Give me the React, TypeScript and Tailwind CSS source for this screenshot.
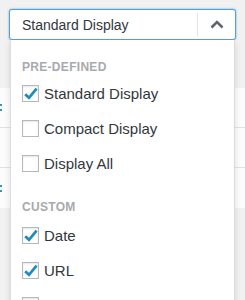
import React from "react";

const font = { fontFamily: '"Liberation Sans", Arial, sans-serif' };

function Check() {
  return (
    <svg width="16" height="16" viewBox="0 0 16 16" className="absolute left-[0px] top-[0px]">
      <path d="M2.2 8.2 L6 11.8 L13.6 2.6" fill="none" stroke="#1e8cbe" strokeWidth="2.8" strokeLinecap="butt" strokeLinejoin="miter" />
    </svg>
  );
}

function Row({ label, checked }: { label?: string; checked?: boolean }) {
  return (
    <div className="flex h-[35px] items-center gap-[5px]">
      <div className="relative h-[17px] w-[17px] shrink-0 border border-[#b4b9be] bg-white shadow-[inset_0_1px_2px_rgba(0,0,0,0.1)]">
        {checked && <Check />}
      </div>
      {label && <span className="text-[15px] leading-[18px] text-[#32373c]">{label}</span>}
    </div>
  );
}

function BgRow({ dots }: { dots?: boolean }) {
  return (
    <div className="flex h-[40px] items-center border-b border-[#e1e1e1] bg-[#fcfcfc] last:border-b-0">
      {dots && (
        <div className="flex w-[2px] flex-col gap-[3px]">
          <div className="h-[2px] w-[2px] bg-[#3a8fc2]" />
          <div className="h-[2px] w-[2px] bg-[#3a8fc2]" />
        </div>
      )}
    </div>
  );
}

export default function App() {
  return (
    <div className="relative h-[300px] w-[245px] overflow-hidden bg-[#f1f1f1]" style={font}>
      <div className="h-[88px]" />
      <div className="flex flex-col">
        <BgRow dots />
        <BgRow />
        <BgRow dots />
      </div>

      <div className="absolute left-[9px] top-[9px] w-[227px]">
        <div className="flex h-[31px] items-center rounded-[3px] border border-[#5b9dd9] bg-white shadow-[0_0_2px_rgba(30,140,190,0.8)]">
          <span className="flex-1 pl-[12px] text-[14px] leading-[18px] text-[#32373c]">Standard Display</span>
          <div className="h-[23px] w-px bg-[#e2e4e7]" />
          <div className="flex w-[37px] items-center justify-center">
            <svg width="14" height="9" viewBox="0 0 14 9">
              <path d="M1.5 7.5 L7 2 L12.5 7.5" fill="none" stroke="#60656a" strokeWidth="2.6" />
            </svg>
          </div>
        </div>
        <div className="mx-[1px] h-[270px] border-x border-[#dcdcde] bg-white px-[11px] pt-[19px] shadow-[0_3px_6px_rgba(0,0,0,0.12)]">
          <div className="h-[16px] text-[12px] font-bold leading-[16px] tracking-[0.3px] text-[#a7aaad]">PRE-DEFINED</div>
          <div className="mt-[1px]">
            <Row label="Standard Display" checked />
            <Row label="Compact Display" />
            <Row label="Display All" />
          </div>
          <div className="mt-[18px] h-[16px] text-[12px] font-bold leading-[16px] tracking-[0.3px] text-[#a7aaad]">CUSTOM</div>
          <div className="mt-[3px]">
            <Row label="Date" checked />
            <Row label="URL" checked />
            <Row />
          </div>
        </div>
      </div>
    </div>
  );
}
